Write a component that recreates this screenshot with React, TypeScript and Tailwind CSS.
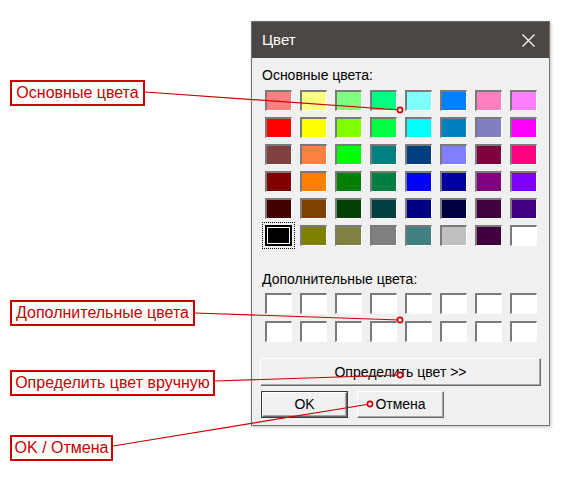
import React from "react";

const basic = [
  ["#ff8080", "#ffff80", "#80ff80", "#00ff80", "#80ffff", "#0080ff", "#ff80c0", "#ff80ff"],
  ["#ff0000", "#ffff00", "#80ff00", "#00ff40", "#00ffff", "#0080c0", "#8080c0", "#ff00ff"],
  ["#804040", "#ff8040", "#00ff00", "#008080", "#004080", "#8080ff", "#800040", "#ff0080"],
  ["#800000", "#ff8000", "#008000", "#008040", "#0000ff", "#0000a0", "#800080", "#8000ff"],
  ["#400000", "#804000", "#004000", "#004040", "#000080", "#000040", "#400040", "#400080"],
  ["#000000", "#808000", "#808040", "#808080", "#408080", "#c0c0c0", "#400040", "#ffffff"],
];

const callouts = [
  { text: "Основные цвета", cls: "top-[80px] w-[135px]" },
  { text: "Дополнительные цвета", cls: "top-[300px] w-[185px]" },
  { text: "Определить цвет вручную", cls: "top-[370px] w-[205px]" },
  { text: "OK / Отмена", cls: "top-[435px] w-[103px]" },
];

const lines = [
  { x1: 145, y1: 92, x2: 400, y2: 110 },
  { x1: 195, y1: 313, x2: 400, y2: 320 },
  { x1: 215, y1: 381, x2: 400, y2: 375 },
  { x1: 113, y1: 446, x2: 370, y2: 404 },
];

const Swatch = ({ color, selected }: { color: string; selected?: boolean }) => {
  if (selected) {
    return (
      <div className="w-[27px] h-[21px] border-2 border-black outline outline-1 outline-dotted outline-black outline-offset-[2px]">
        <div className="w-full h-full border border-white" style={{ background: color }} />
      </div>
    );
  }
  return (
    <div
      className="w-[27px] h-[21px] border-t-2 border-l-2 border-b border-r border-t-[#7a7a7a] border-l-[#7a7a7a] border-b-white border-r-white"
      style={{ background: color }}
    />
  );
};

const WinButton = ({
  children,
  className,
  isDefault,
}: {
  children: React.ReactNode;
  className: string;
  isDefault?: boolean;
}) => (
  <div className={`${className} ${isDefault ? "border border-[#3c3c3c]" : ""}`}>
    <div className="h-full flex items-center justify-center bg-[#f0f0f0] border border-t-white border-l-white border-r-[#6b6b6b] border-b-[#6b6b6b] shadow-[inset_-1px_-1px_0_#a6a6a6] text-[14px] text-black">
      {children}
    </div>
  </div>
);

export default function App() {
  return (
    <div
      className="relative w-[572px] h-[499px] bg-white overflow-hidden pt-[21px] pl-[251px]"
      style={{ fontFamily: '"Liberation Sans", Arial, sans-serif' }}
    >
      {/* dialog */}
      <div className="w-[299px] h-[405px] border border-[#707070] bg-[#f0f0f0] shadow-[1px_1px_3px_rgba(0,0,0,0.25)] flex flex-col">
        <div className="h-[36px] bg-[#4a4744] flex items-center justify-between pl-[10px] pr-[14px]">
          <span className="text-white text-[15px]">Цвет</span>
          <svg width="13" height="13" viewBox="0 0 13 13">
            <path d="M0.5 0.5 L12.5 12.5 M12.5 0.5 L0.5 12.5" stroke="#ffffff" strokeWidth="1.2" />
          </svg>
        </div>

        <div className="mt-[9px] pl-[10px] text-[14px] leading-[16px] text-black">Основные цвета:</div>
        <div className="mt-[7px] ml-[13px] grid grid-cols-[repeat(8,27px)] gap-x-[8px] gap-y-[6px]">
          {basic.map((row, r) =>
            row.map((c, i) => <Swatch key={`${r}-${i}`} color={c} selected={r === 5 && i === 0} />)
          )}
        </div>

        <div className="mt-[25px] pl-[10px] text-[14px] leading-[16px] text-black">Дополнительные цвета:</div>
        <div className="mt-[6px] ml-[13px] grid grid-cols-[repeat(8,27px)] gap-x-[8px] gap-y-[7px]">
          {Array.from({ length: 16 }).map((_, i) => (
            <Swatch key={i} color="#ffffff" />
          ))}
        </div>

        <WinButton className="mt-[16px] ml-[8px] w-[281px] h-[28px]">Определить цвет &gt;&gt;</WinButton>

        <div className="mt-[5px] ml-[9px] flex gap-[9px]">
          <WinButton className="w-[87px] h-[27px]" isDefault>
            OK
          </WinButton>
          <WinButton className="w-[87px] h-[27px]">Отмена</WinButton>
        </div>
      </div>

      {/* callout labels */}
      {callouts.map((c) => (
        <div
          key={c.text}
          className={`absolute left-[10px] h-[26px] border-2 border-[#cc0000] bg-white flex items-center justify-center text-[16px] text-[#cc0000] whitespace-nowrap ${c.cls}`}
        >
          {c.text}
        </div>
      ))}

      {/* callout lines */}
      <svg className="absolute left-0 top-0 pointer-events-none" width="572" height="499">
        {lines.map((l, i) => (
          <g key={i}>
            <line x1={l.x1} y1={l.y1} x2={l.x2} y2={l.y2} stroke="#cc0000" strokeWidth="1.2" />
            <circle cx={l.x2} cy={l.y2} r="2.6" fill="#ffffff" stroke="#cc0000" strokeWidth="1.6" />
          </g>
        ))}
      </svg>
    </div>
  );
}
